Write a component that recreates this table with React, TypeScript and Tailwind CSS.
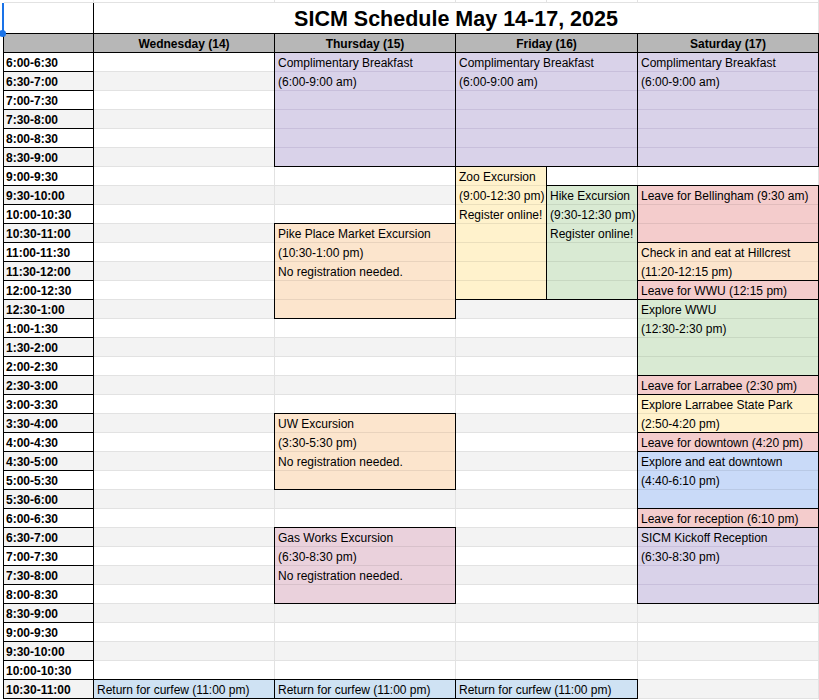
import React from "react";

type Tone = { bg: string; line: string };

type ScheduleEvent = {
  cols: number[];
  r: number;
  n: number;
  place: string;
  tone: Tone;
  lines: string[];
};

const purple: Tone = { bg: "bg-[#d9d2e9]", line: "border-[#c8bfdb]" };
const orange: Tone = { bg: "bg-[#fce5cd]", line: "border-[#e9d3bd]" };
const yellow: Tone = { bg: "bg-[#fff2cc]", line: "border-[#ebdfbc]" };
const green: Tone = { bg: "bg-[#d9ead3]", line: "border-[#c8d8c2]" };
const red: Tone = { bg: "bg-[#f4cccc]", line: "border-[#e1bcbc]" };
const mauve: Tone = { bg: "bg-[#ead1dc]", line: "border-[#d8c1cb]" };
const cornflower: Tone = { bg: "bg-[#c9daf8]", line: "border-[#b9c9e5]" };
const blue: Tone = { bg: "bg-[#cfe2f3]", line: "border-[#bfd0e0]" };

const times = [
  "6:00-6:30", "6:30-7:00", "7:00-7:30", "7:30-8:00", "8:00-8:30", "8:30-9:00",
  "9:00-9:30", "9:30-10:00", "10:00-10:30", "10:30-11:00", "11:00-11:30", "11:30-12:00",
  "12:00-12:30", "12:30-1:00", "1:00-1:30", "1:30-2:00", "2:00-2:30", "2:30-3:00",
  "3:00-3:30", "3:30-4:00", "4:00-4:30", "4:30-5:00", "5:00-5:30", "5:30-6:00",
  "6:00-6:30", "6:30-7:00", "7:00-7:30", "7:30-8:00", "8:00-8:30", "8:30-9:00",
  "9:00-9:30", "9:30-10:00", "10:00-10:30", "10:30-11:00",
];

const breakfast = ["Complimentary Breakfast", "(6:00-9:00 am)"];
const curfew = ["Return for curfew (11:00 pm)"];

// grid rows: 1 = stub, 2 = title, 3 = header, 4.. = time slots
const events: ScheduleEvent[] = [
  { cols: [2], r: 33, n: 1, place: "col-start-2 row-start-37", tone: blue, lines: curfew },

  { cols: [3], r: 0, n: 6, place: "col-start-3 row-start-4 row-span-6", tone: purple, lines: breakfast },
  { cols: [3], r: 9, n: 5, place: "col-start-3 row-start-13 row-span-5", tone: orange, lines: ["Pike Place Market Excursion", "(10:30-1:00 pm)", "No registration needed."] },
  { cols: [3], r: 19, n: 4, place: "col-start-3 row-start-23 row-span-4", tone: orange, lines: ["UW Excursion", "(3:30-5:30 pm)", "No registration needed."] },
  { cols: [3], r: 25, n: 4, place: "col-start-3 row-start-29 row-span-4", tone: mauve, lines: ["Gas Works Excursion", "(6:30-8:30 pm)", "No registration needed."] },
  { cols: [3], r: 33, n: 1, place: "col-start-3 row-start-37", tone: blue, lines: curfew },

  { cols: [4, 5], r: 0, n: 6, place: "col-start-4 col-span-2 row-start-4 row-span-6", tone: purple, lines: breakfast },
  { cols: [4], r: 6, n: 7, place: "col-start-4 row-start-10 row-span-7", tone: yellow, lines: ["Zoo Excursion", "(9:00-12:30 pm)", "Register online!"] },
  { cols: [5], r: 7, n: 6, place: "col-start-5 row-start-11 row-span-6", tone: green, lines: ["Hike Excursion", "(9:30-12:30 pm)", "Register online!"] },
  { cols: [4, 5], r: 33, n: 1, place: "col-start-4 col-span-2 row-start-37", tone: blue, lines: curfew },

  { cols: [6], r: 0, n: 6, place: "col-start-6 row-start-4 row-span-6", tone: purple, lines: breakfast },
  { cols: [6], r: 7, n: 3, place: "col-start-6 row-start-11 row-span-3", tone: red, lines: ["Leave for Bellingham (9:30 am)"] },
  { cols: [6], r: 10, n: 2, place: "col-start-6 row-start-14 row-span-2", tone: orange, lines: ["Check in and eat at Hillcrest", "(11:20-12:15 pm)"] },
  { cols: [6], r: 12, n: 1, place: "col-start-6 row-start-16", tone: red, lines: ["Leave for WWU (12:15 pm)"] },
  { cols: [6], r: 13, n: 4, place: "col-start-6 row-start-17 row-span-4", tone: green, lines: ["Explore WWU", "(12:30-2:30 pm)"] },
  { cols: [6], r: 17, n: 1, place: "col-start-6 row-start-21", tone: red, lines: ["Leave for Larrabee (2:30 pm)"] },
  { cols: [6], r: 18, n: 2, place: "col-start-6 row-start-22 row-span-2", tone: yellow, lines: ["Explore Larrabee State Park", "(2:50-4:20 pm)"] },
  { cols: [6], r: 20, n: 1, place: "col-start-6 row-start-24", tone: red, lines: ["Leave for downtown (4:20 pm)"] },
  { cols: [6], r: 21, n: 3, place: "col-start-6 row-start-25 row-span-3", tone: cornflower, lines: ["Explore and eat downtown", "(4:40-6:10 pm)"] },
  { cols: [6], r: 24, n: 1, place: "col-start-6 row-start-28", tone: red, lines: ["Leave for reception (6:10 pm)"] },
  { cols: [6], r: 25, n: 4, place: "col-start-6 row-start-29 row-span-4", tone: purple, lines: ["SICM Kickoff Reception", "(6:30-8:30 pm)"] },
];

const days = ["Wednesday (14)", "Thursday (15)", "Friday (16)", "Saturday (17)"];

function EventBlock({ ev }: { ev: ScheduleEvent }) {
  const rows = Array.from({ length: ev.n }, (_, i) => ev.lines[i] ?? "");
  return (
    <div className={`${ev.place} ${ev.tone.bg} relative z-10 -mt-px -ml-px flex flex-col overflow-hidden border border-black`}>
      {rows.map((text, i) => (
        <div key={i} className={`h-[19px] shrink-0 border-b ${ev.tone.line} pl-[3px] leading-[20px] whitespace-nowrap`}>
          {text}
        </div>
      ))}
    </div>
  );
}

export default function App() {
  const taken = new Set<string>();
  events.forEach((e) =>
    e.cols.forEach((c) => {
      for (let i = 0; i < e.n; i++) taken.add(`${e.r + i}-${c}`);
    })
  );

  const cells: React.ReactNode[] = [];
  times.forEach((t, r) => {
    const shade = r % 2 ? "bg-[#f3f3f3]" : "bg-white";
    cells.push(
      <div key={`t${r}`} className={`${shade} relative z-10 -mt-px -ml-px border border-black pl-[2px] font-bold leading-[20px]`}>
        {t}
      </div>
    );
    const empty = (key: string, span = "") => (
      <div key={key} className={`${shade} ${span} border-r border-b border-[#e2e2e2]`} />
    );
    [2, 3].forEach((c) => {
      if (!taken.has(`${r}-${c}`)) cells.push(empty(`e${r}-${c}`));
    });
    const a = !taken.has(`${r}-4`);
    const b = !taken.has(`${r}-5`);
    if (a && b) cells.push(empty(`e${r}-45`, "col-span-2"));
    else {
      if (a) cells.push(empty(`e${r}-4`));
      if (b) cells.push(empty(`e${r}-5`));
    }
    if (!taken.has(`${r}-6`)) cells.push(empty(`e${r}-6`));
  });

  return (
    <div className="h-[700px] w-[819px] overflow-hidden bg-white font-['Liberation_Sans',Arial,sans-serif] text-[12px] text-black">
      <div className="ml-[4px] grid grid-cols-[90px_181px_181px_91px_91px_181px] grid-rows-[3px_31px_19px_repeat(34,19px)]">
        {/* stub of the row above */}
        {[0, 1, 2, 3, 4, 5].map((i) => (
          <div key={`s${i}`} className="border-r border-b border-[#e2e2e2]" />
        ))}

        {/* title row */}
        <div className="relative -ml-[2px] border-l-2 border-r border-l-[#1a73e8] border-r-black">
          <span className="absolute -bottom-[3px] -left-[5px] z-20 h-[7px] w-[7px] rounded-full bg-[#1a73e8]" />
        </div>
        <div className="col-span-5 flex items-center justify-center border-r border-[#e2e2e2] pt-px text-[21.5px] font-bold">
          SICM Schedule May 14-17, 2025
        </div>

        {/* header row */}
        <div className="relative z-10 -mt-px -ml-px border border-black bg-[#b7b7b7]" />
        {days.map((d) => (
          <div
            key={d}
            className={`relative z-10 -mt-px -ml-px border border-black bg-[#b7b7b7] text-center font-bold leading-[20px] ${d.startsWith("Friday") ? "col-span-2" : ""}`}
          >
            {d}
          </div>
        ))}

        {events.map((ev, i) => (
          <EventBlock key={`ev${i}`} ev={ev} />
        ))}
        {cells}
      </div>
    </div>
  );
}
